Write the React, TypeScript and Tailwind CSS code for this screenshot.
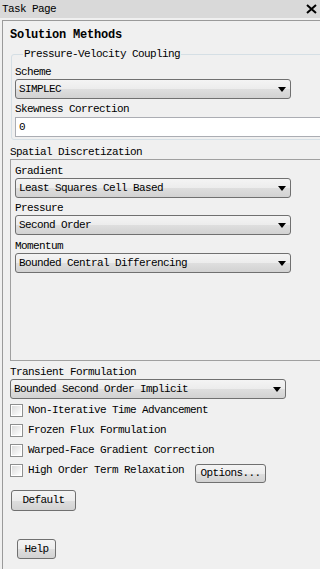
import { ReactNode } from "react"

const btnBg =
  "bg-[linear-gradient(to_bottom,#f4f4f4_0%,#ececec_50%,#dedede_51%,#d2d2d2_100%)]"

function Select({ value, width = "w-[276px]" }: { value: string; width?: string }) {
  return (
    <div
      className={`${width} h-[20px] flex items-center justify-between border border-[#707070] rounded-[3px] pl-[3px] pr-[4px] ${btnBg}`}
    >
      <span className="leading-none">{value}</span>
      <svg width="8" height="5" viewBox="0 0 8 5">
        <path d="M0 0 H8 L4 5 Z" fill="#000" />
      </svg>
    </div>
  )
}

function Label({ children, className = "" }: { children: ReactNode; className?: string }) {
  return <div className={`h-[14px] leading-[14px] ${className}`}>{children}</div>
}

function Check({ label, children }: { label: string; children?: ReactNode }) {
  return (
    <div className="h-[20px] flex items-start">
      <div className="mt-[3px] w-[13px] h-[13px] border border-[#8e8f8f] bg-white p-[1px]">
        <div className="w-full h-full bg-[linear-gradient(135deg,#dcdcdc_0%,#f4f4f4_70%,#ffffff_100%)]" />
      </div>
      <span className="ml-[5px] h-[20px] leading-[19px]">{label}</span>
      {children}
    </div>
  )
}

function Button({ label, className = "" }: { label: string; className?: string }) {
  return (
    <div
      className={`flex items-center justify-center border border-[#707070] rounded-[3px] ${btnBg} ${className}`}
    >
      {label}
    </div>
  )
}

export default function App() {
  return (
    <div className="w-[320px] h-[569px] overflow-hidden bg-[#f0f0f0] text-black text-[11px] tracking-[-0.6px] font-[family-name:'Liberation_Mono',monospace]">
      {/* title bar */}
      <div className="h-[18px] bg-[#d9d9d9] flex items-center justify-between pl-[2px] pr-[3px]">
        <span>Task Page</span>
        <svg width="11" height="10" viewBox="0 0 11 10">
          <path d="M1 1 L10 9 M10 1 L1 9" stroke="#000" strokeWidth="2" />
        </svg>
      </div>

      <div className="mt-[2px] ml-[2px] h-[549px] border-t border-l border-[#9a9a9a]">
        <div className="pt-[7px] pl-[7px] text-[12px] font-bold tracking-[-0.2px] leading-[14px]">
          Solution Methods
        </div>

        <fieldset className="mt-[5px] ml-[8px] w-[330px] border border-[#d5dfe5] rounded-[3px] pl-[3px] pb-[2px]">
          <legend className="ml-[8px] px-[1px] leading-[14px]">Pressure-Velocity Coupling</legend>
          <Label className="mt-[4px]">Scheme</Label>
          <Select value="SIMPLEC" />
          <Label className="mt-[3px]">Skewness Correction</Label>
          <div className="mt-[1px] w-[320px] h-[20px] bg-white border border-[#abadb3] flex items-center pl-[3px]">
            0
          </div>
        </fieldset>

        <Label className="mt-[5px] ml-[7px]">Spatial Discretization</Label>
        <div className="ml-[7px] w-[330px] h-[202px] border border-[#a0a0a0] pt-[4px] pl-[4px]">
          <Label>Gradient</Label>
          <Select value="Least Squares Cell Based" />
          <Label className="mt-[3px]">Pressure</Label>
          <Select value="Second Order" />
          <Label className="mt-[4px]">Momentum</Label>
          <Select value="Bounded Central Differencing" />
        </div>

        <div className="ml-[7px]">
          <Label className="mt-[4px]">Transient Formulation</Label>
          <Select value="Bounded Second Order Implicit" />
          <div className="mt-[2px]">
            <Check label="Non-Iterative Time Advancement" />
            <Check label="Frozen Flux Formulation" />
            <Check label="Warped-Face Gradient Correction" />
            <Check label="High Order Term Relaxation">
              <Button label="Options..." className="ml-[11px] mt-[3px] w-[71px] h-[19px]" />
            </Check>
          </div>
          <Button label="Default" className="mt-[9px] ml-[1px] w-[65px] h-[21px]" />
          <Button label="Help" className="mt-[28px] ml-[7px] w-[39px] h-[20px]" />
        </div>
      </div>
    </div>
  )
}
